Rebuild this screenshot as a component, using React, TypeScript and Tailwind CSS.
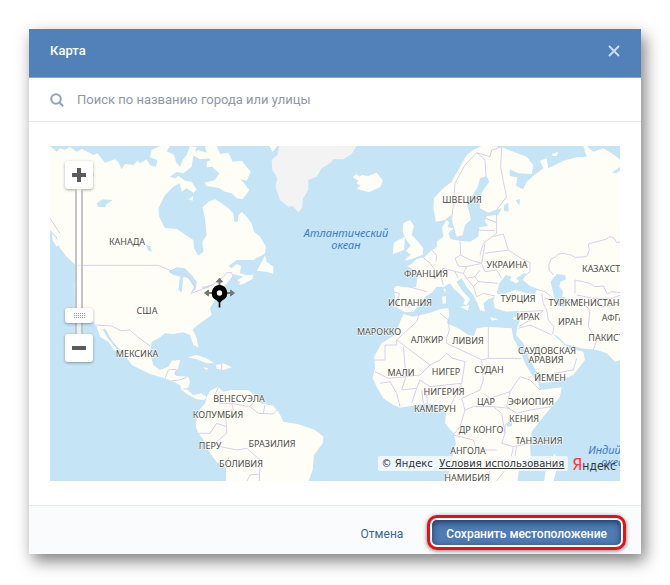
import { useState } from 'react';

const labels: [string, number, number][] = [
  ['КАНАДА', 76, 99],
  ['США', 96, 168],
  ['МЕКСИКА', 86, 211],
  ['ВЕНЕСУЭЛА', 188, 256],
  ['КОЛУМБИЯ', 167, 272],
  ['ПЕРУ', 159, 303],
  ['БРАЗИЛИЯ', 221, 301],
  ['БОЛИВИЯ', 190, 321],
  ['ШВЕЦИЯ', 411, 57],
  ['УКРАИНА', 456, 122],
  ['КАЗАХСТАН', 556, 126],
  ['ФРАНЦИЯ', 375, 131],
  ['ИСПАНИЯ', 359, 160],
  ['ТУРЦИЯ', 467, 156],
  ['ТУРКМЕНИСТАН', 533, 160],
  ['ИРАК', 477, 174],
  ['ИРАН', 519, 179],
  ['АФГАНИСТАН', 580, 175],
  ['ПАКИСТАН', 561, 195],
  ['МАРОККО', 328, 189],
  ['АЛЖИР', 376, 197],
  ['ЛИВИЯ', 417, 198],
  ['САУДОВСКАЯ', 496, 208],
  ['АРАВИЯ', 495, 217],
  ['МАЛИ', 350, 230],
  ['НИГЕР', 395, 229],
  ['СУДАН', 438, 227],
  ['ЙЕМЕН', 499, 235],
  ['НИГЕРИЯ', 393, 249],
  ['КАМЕРУН', 384, 266],
  ['ЦАР', 435, 259],
  ['ЭФИОПИЯ', 480, 259],
  ['КЕНИЯ', 473, 276],
  ['ДР КОНГО', 430, 287],
  ['ТАНЗАНИЯ', 488, 298],
  ['АНГОЛА', 417, 308],
  ['НАМИБИЯ', 416, 335],
];

function Pin() {
  return (
    <g transform="translate(168.500 147)">
      <g fill="#777" stroke="#777">
        <path d="M-12 0H12M0 0V-12" strokeWidth="2" />
        <path d="M-15 0l4-3v6zM15 0l-4-3v6zM0-15l-3 4h6z" strokeWidth="1" />
      </g>
      <path d="M0-8a8 8 0 0 1 3 15.300L.8 9.500V14.500H-.8V9.500L-3 7.300A8 8 0 0 1 0-8z" fill="#000" />
      <circle r="2.700" fill="#fff" />
    </g>
  );
}

function WorldMap() {
  return (
    <svg
      viewBox="-1 0 570 335"
      preserveAspectRatio="xMidYMid slice"
      className="block h-[335px] w-full bg-[#c5e4f6]"
      role="img"
      aria-label="Карта мира"
    >
      <g transform="translate(-1 -6) scale(.33333)" fill="#fffef6">
        {/* North America */}
        <path d="M0 18L20 35 30 25 45 30 60 20 80 36 96 26 130 45 142 40 165 68 195 58 205 66 215 88 225 72 250 75 262 62 270 70 290 58 300 76 318 80 322 60 300 52 305 30 330 18 360 18 350 34 372 44 378 66 390 80 398 60 410 45 420 18 440 22 430 48 425 80 400 100 380 96 360 110 375 115 388 130 370 140 345 165 325 205 328 232 345 264 380 267 415 290 430 300 432 325 445 347 460 335 457 305 470 285 465 235 457 202 475 185 495 178 515 190 535 205 550 220 553 245 563 245 566 225 575 215 590 230 605 250 612 275 630 290 648 320 645 340 610 360 560 360 535 378 545 385 560 372 573 378 570 400 590 405 610 404 608 416 580 432 570 435 562 420 580 410 552 402 535 425 520 440 505 455 495 480 480 505 485 525 450 550 428 568 440 595 445 622 430 615 420 585 400 577 370 582 345 580 330 592 305 605 300 640 310 675 330 690 355 680 365 662 390 660 385 685 372 700 378 708 415 710 420 725 412 750 430 765 455 760 470 772 462 780 440 778 415 765 395 750 390 735 370 725 345 715 300 702 245 675 235 660 210 630 185 600 165 565 158 568 170 590 195 620 203 635 192 630 175 605 150 590 140 560 130 545 100 520 75 500 74 430 80 378 50 350 30 325 20 290 0 270z" />
        <path d="M422 42L445 30 470 38 465 18 500 18 510 42 535 38 548 65 575 62 602 95 590 122 572 118 598 150 578 178 560 175 545 160 525 155 505 143 470 138 463 128 495 120 508 100 490 85 478 55 450 58z" />
        <path d="M470 65L487 60 487 80 470 82zM372 118L385 107 405 122 425 125 440 150 430 158 410 145 395 155 390 132zM415 178L430 168 428 182zM645 345L650 365 670 380 670 402 652 396 620 392 632 372z" />
        <path d="M5 280L16 292 30 312 20 320 8 300z" />
        {/* Caribbean */}
        <path d="M412 652L440 645 470 655 492 670 470 670 440 658zM498 675L520 670 545 682 520 690 500 686zM458 682L475 684 470 690z" />
        {/* South America */}
        <path d="M470 772L480 752 505 740 520 755 545 750 595 750 620 772 632 790 670 797 688 820 700 845 745 853 795 870 820 890 818 910 792 945 788 990 775 1025 528 1025 528 985 500 965 480 940 465 905 445 880 437 860 440 835 452 805 466 790z" />
        {/* Greenland, Iceland, British Isles */}
        <path d="M688 18L682 45 665 60 667 90 682 115 676 140 690 180 715 200 728 198 745 217 756 205 759 175 775 150 775 120 800 110 815 85 842 68 850 58 880 58 905 42 920 18z" fill="#f3f3f3" />
        <path d="M658 18L682 18 668 36zM908 112L918 102 930 110 935 105 955 108 980 98 998 120 992 140 957 157 920 147 932 135 920 132 925 122z" />
        <path d="M1060 250L1080 240 1092 258 1085 285 1100 300 1120 325 1118 345 1070 362 1065 358 1082 345 1068 332 1082 318 1068 298 1058 275zM1045 300L1065 290 1062 330 1028 343 1032 308z" />

        <g transform="translate(1140 0)">
          {/* Eurasia */}
          <path d="M155 18L130 30 110 45 90 80 65 125 40 145 12 175 10 205 18 245 45 240 62 225 70 255 80 290 98 285 105 255 122 240 118 215 110 192 128 165 143 142 150 115 170 108 178 125 160 150 148 175 150 205 175 218 215 205 205 225 170 228 165 245 175 258 148 262 145 290 120 305 90 302 62 298 55 280 70 265 52 262 58 248 50 240 36 262 40 290 20 305 22 320 5 330-15 350-40 358-60 375-70 378-42 392-38 415-42 442-75 442-100 437-108 445-105 470-108 500-90 508-75 517-50 515-32 492-15 470 5 458 20 440 40 440 60 430 72 447 90 462 105 480 100 492 110 495 120 478 95 450 80 425 95 415 110 440 130 465 142 490 150 510 165 515 160 490 175 478 195 470 190 482 195 505 230 515 268 512 270 540 262 560 258 585 280 610 300 660 322 700 332 730 375 725 430 705 465 660 460 635 430 628 412 622 385 598 368 582 385 590 405 612 455 625 500 630 530 640 555 665 572 660 572 90 560 100 545 98 572 80 572 60 545 40 520 25 490 35 470 18 460 18 470 50 440 52 400 62 375 75 355 85 350 55 330 62 340 85 320 100 290 125 280 148 258 138 262 112 240 108 238 88 265 100 305 102 310 75 290 50 250 35 215 22 185 18z" />
          <path d="M365 42L385 36 380 48 368 48zM90 500L118 495 114 512zM36 470L48 468 48 490 38 492zM40 448L46 445 46 460zM180 532L205 538 185 542zM245 535L262 528 256 540z" />
          {/* Inland seas */}
          <path d="M203 450L208 430 228 405 245 410 240 420 258 430 268 424 258 415 282 400 290 402 278 420 300 438 322 446 315 462 285 458 255 450 230 460 200 462zM362 425L380 402 405 405 408 418 392 425 388 440 400 455 395 470 412 475 408 500 385 498 372 470zM222 195L235 188 236 215 222 212zM257 180L270 178 268 198zM188 212L212 208 200 225 185 224z" fill="#c5e4f6" />
          {/* Africa */}
          <path transform="translate(0 510)" d="M-80 12L-52 20 0 8 35-4 55-5 58 15 50 40 85 55 115 75 132 78 140 55 175 50 245 55 250 85 270 120 285 160 300 185 325 220 330 240 395 232 390 260 340 320 305 365 300 400 302 440 270 460 262 515 50 515 65 450 78 400 70 370 45 340 48 310 30 285-10 280-40 285-90 293-110 285-140 265-160 230-172 205-165 175-168 140-145 100-105 75-90 35z" />
          <path d="M375 940L383 975 370 1025 342 1025 350 975z" />
        </g>

        {/* Lakes */}
        <path d="M140 190L158 178 188 180 170 192 165 202 145 200zM355 395L380 382 405 385 425 405 440 425 438 445 420 465 432 442 415 415 400 410 395 458 385 450 390 410 370 405zM455 440L480 436 475 445 458 446zM288 315L300 318 306 335 295 332zM120 105L132 100 130 112z" fill="#c5e4f6" />
        <path d="M1370 848L1386 845 1386 858 1372 860z" fill="#c5e4f6" />

        {/* Borders */}
        <g fill="none" stroke="#d8cfee" strokeWidth="3" strokeLinejoin="round">
          <path d="M80 376H325L372 396 410 405 435 440 425 460 480 438 510 420 530 398 545 398 553 420 570 428M0 235L30 280M137 555L185 558 212 572 240 570 262 590 300 618M345 715L355 690 378 688 378 705M365 722L390 720 410 712M400 748L418 745M515 670V690" />
          <path d="M505 742L495 765 510 790 545 790 550 810 525 815 530 860 500 850 480 880 445 880M530 860V880L500 905 512 920 560 930 590 925 630 960 628 1025M537 950L528 985M545 790L600 800 615 780 612 765M600 800L625 820 670 822 680 810M645 795L640 820M590 1025L600 1005 630 1002M1028 455L1048 460 1040 505M1075 440L1130 455" />
          <g transform="translate(1140 0)">
            <path d="M65 235L72 180 75 130 105 75 140 38 165 60 168 108M140 38L180 50 185 30 215 20 212 80 220 125 230 170 200 210M200 225V280L160 310 150 345M200 248L168 235M195 272L145 270M190 290L220 282 235 330 265 350 300 368 300 395 288 405M90 302L92 345 120 360 155 370 165 310M165 340L235 330M75 355L92 345M75 355L85 378 110 380 155 370 165 395 200 390 215 415M110 380L100 400 78 395 40 385 30 400 40 435M100 400L110 415 135 410 150 390M110 415L130 440 145 425 135 410M130 440L140 470 160 460 195 468M145 425L205 430M-25 348L0 370 15 390M5 330L20 345 18 365M85 415L75 395" />
            <path d="M572 305L560 308 552 294 540 290 528 298 500 305 475 312 478 330 470 350 435 352 425 346 400 340 385 342 375 352 364 356 356 375 358 392 372 405M320 448L345 455 365 470M335 460L340 490 350 510 355 540 372 560 368 582M345 475L370 480 385 498M408 490L450 480 480 510 475 560 500 600 490 630M435 460V420L480 430 495 440 520 438 532 462 545 455 572 458M440 465L490 475 520 500 572 490M490 475L545 475 572 465M270 515L340 512M265 560L320 530 340 512M265 565L300 555 365 585M372 700L430 690 440 655" />
            <g transform="translate(0 510)">
              <path d="M175 50V145H275M175 145L155 150 140 142 50 100 50 85 58 60 55 30 30 10M-100 90L-40 35-30 5M-170 150H-135V105H-100V90L0 165 30 150 50 130 68 145 105 155 95 220M-80 110L-72 200-125 205-165 185M-72 200L-30 195 0 165M-72 200L-85 240-40 235-30 210 0 230 95 220 60 290 45 300M-40 235L-55 280M-25 240L-20 280M-10 240L-8 280M-150 220L-120 215-100 250-90 290M155 150L160 210 150 240 95 265 105 300 130 290 190 290 240 295M160 250L180 265 240 245 270 200 300 210 330 240M240 245L230 290 260 310 300 300 365 290M105 300L90 350 70 375 130 390 140 420 200 420M190 290L215 310 225 370 215 400 250 410 300 400M225 370L225 345 250 330M250 410L240 460 200 440 160 460 100 455M240 460L200 513M175 460L180 513M260 410L255 440 270 455" />
            </g>
          </g>
        </g>
      </g>

      <g className="font-['Noto_Sans',sans-serif] text-[9px]" fill="#4d4d4d" stroke="#fffef6" strokeWidth="1" paintOrder="stroke" textAnchor="middle">
        {labels.map(([name, x, y]) => (
          <text key={name} x={x} y={y}>{name}</text>
        ))}
      </g>
      <g className="font-['Noto_Sans',sans-serif] text-[11px] italic" fill="#427bc6" textAnchor="middle">
        <text x="295" y="91">Атлантический</text>
        <text x="295" y="103">океан</text>
        <text x="565" y="308">Индийский</text>
        <text x="565" y="320">океан</text>
      </g>
      <Pin />
    </svg>
  );
}

function ZoomControl() {
  const [zoom, setZoom] = useState(1);
  const button = 'flex h-7 w-7 items-center justify-center rounded-[3px] bg-white shadow-[0_1px_3px_rgba(0,0,0,0.35)]';

  return (
    <div className="absolute top-[15px] left-[15px] flex flex-col items-center">
      <button type="button" aria-label="Приблизить" className={button} onClick={() => setZoom(Math.min(12, zoom + 1))}>
        <svg width="14" height="14" viewBox="0 0 14 14"><path d="M7 0V14M0 7H14" stroke="#5c5c5c" strokeWidth="4" /></svg>
      </button>
      <div className="relative flex h-[145px] w-7 justify-center">
        <div className="h-full w-2 border-x-2 border-[#c4c4c4] bg-white/50" />
        <input
          type="range"
          aria-label="Масштаб"
          min={0}
          max={12}
          value={zoom}
          onChange={(e) => setZoom(Number(e.target.value))}
          className="absolute inset-0 h-full w-7 appearance-none bg-transparent [direction:rtl] [writing-mode:vertical-lr] [&::-webkit-slider-thumb]:h-[15px] [&::-webkit-slider-thumb]:w-7 [&::-webkit-slider-thumb]:appearance-none [&::-webkit-slider-thumb]:rounded-[3px] [&::-webkit-slider-thumb]:bg-white [&::-webkit-slider-thumb]:bg-[repeating-linear-gradient(90deg,#999_0_1px,transparent_1px_2px),repeating-linear-gradient(90deg,#999_0_1px,transparent_1px_2px),repeating-linear-gradient(90deg,#999_0_1px,transparent_1px_2px)] [&::-webkit-slider-thumb]:bg-[size:11px_1px] [&::-webkit-slider-thumb]:bg-[position:9px_5px,9px_7px,9px_9px] [&::-webkit-slider-thumb]:bg-no-repeat [&::-webkit-slider-thumb]:shadow-[0_1px_3px_rgba(0,0,0,0.35)]"
        />
      </div>
      <button type="button" aria-label="Отдалить" className={button} onClick={() => setZoom(Math.max(0, zoom - 1))}>
        <svg width="14" height="4" viewBox="0 0 14 4"><path d="M0 2H14" stroke="#5c5c5c" strokeWidth="4" /></svg>
      </button>
    </div>
  );
}

export default function App() {
  return (
    <main className="bg-white p-[29px] font-[Roboto,sans-serif] text-[13px]">
      <div role="dialog" aria-labelledby="title" className="bg-white shadow-[4px_7px_15px_rgba(0,0,0,0.5)]">
        <header className="flex h-[49px] items-center justify-between border-b border-[#85a6cd] bg-[#5181b8] px-[21px] pb-1">
          <h1 id="title" className="font-medium text-white">Карта</h1>
          <button type="button" aria-label="Закрыть" className="-mr-1 p-1">
            <svg width="12" height="12" viewBox="0 0 12 12"><path d="M1 1L11 11M11 1L1 11" stroke="#cfdeee" strokeWidth="1.800" /></svg>
          </button>
        </header>

        <label className="flex h-11 items-center gap-[13px] border-b border-[#e7e8ec] px-[21px]">
          <svg width="14" height="14" viewBox="0 0 14 14" fill="none" stroke="#8fa3bf" strokeWidth="2">
            <circle cx="6" cy="6" r="4.800" />
            <path d="M9.500 9.500L13.200 13.200" />
          </svg>
          <input
            type="text"
            aria-label="Поиск"
            placeholder="Поиск по названию города или улицы"
            className="min-w-0 flex-1 outline-none placeholder:text-[#8e98a6]"
          />
        </label>

        <div className="px-[21px] py-6">
          <div className="relative overflow-hidden">
            <WorldMap />
            <ZoomControl />
            <div className="absolute right-[4px] bottom-[7px] flex items-center gap-1">
              <p className="rounded-[2px] bg-white/70 px-1 font-['DejaVu_Sans',sans-serif] text-[10px] leading-[15px] text-[#333]">
                © Яндекс&nbsp; <a href="#terms" className="underline">Условия использования</a>
              </p>
              <a href="#yandex" className="pt-1 font-['Liberation_Sans_Narrow','DejaVu_Sans_Condensed',sans-serif] text-xs leading-4 text-[#333]">
                <span className="text-base leading-4 text-[#f33]">Я</span>ндекс
              </a>
            </div>
          </div>
        </div>

        <footer className="flex h-[49px] items-center justify-end gap-6 border-t border-[#e7e8ec] bg-[#fafbfc] pt-2 pr-[15px] pb-1 text-xs">
          <button type="button" className="pt-[3px] text-[#3b6690]">Отмена</button>
          <div className="rounded-[10px] border-[3px] border-[#ec0f12] bg-white p-[2px] shadow-[0_1px_4px_rgba(0,0,0,0.5)]">
            <button type="button" className="block h-[25px] rounded-[5px] bg-[#4d7bb2] px-[14px] pt-[3px] font-medium text-white shadow-[inset_0_2px_6px_rgba(15,35,75,0.8)]">
              Сохранить местоположение
            </button>
          </div>
        </footer>
      </div>
    </main>
  );
}
